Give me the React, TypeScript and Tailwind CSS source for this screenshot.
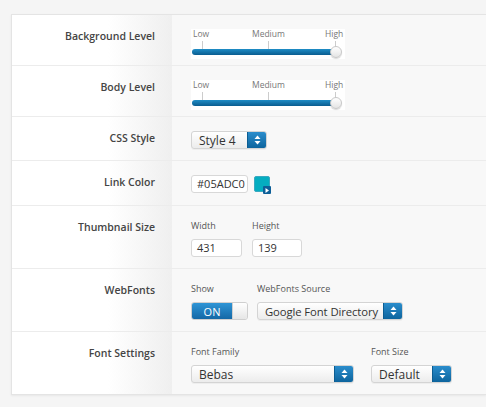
import React from 'react'

const font = { fontFamily: '"Open Sans", "DejaVu Sans", sans-serif' }

function Arrows() {
    return (
        <svg width="7" height="10" viewBox="0 0 7 10">
            <path d="M3.5 0.5 L6.5 4 L0.5 4 Z" fill="#fff" />
            <path d="M3.5 9.5 L6.5 6 L0.5 6 Z" fill="#fff" />
        </svg>
    )
}

function Select({ label, width, text = 'text-[12px]' }: { label: string; width: string; text?: string }) {
    return (
        <div className={`${width} h-[18px] flex rounded-[3px] border border-[#d4d4d4] bg-gradient-to-b from-white to-[#ececec] overflow-hidden shadow-[0_1px_0_rgba(0,0,0,0.04)]`}>
            <div className={`flex-1 min-w-0 whitespace-nowrap pl-[7px] ${text} leading-[17px] text-[#333]`}>{label}</div>
            <div className="w-[19px] h-full flex items-center justify-center bg-gradient-to-b from-[#2a8dcc] to-[#0d659e] border-l border-[#0c5d92]">
                <Arrows />
            </div>
        </div>
    )
}

function Slider() {
    return (
        <div className="relative w-[154px] h-[30px] bg-white">
            <span className="absolute left-[2px] top-[-1px] text-[8.5px] leading-[12px] text-[#777]">Low</span>
            <span className="absolute left-[61px] top-[-1px] text-[8.5px] leading-[12px] text-[#777]">Medium</span>
            <span className="absolute left-[134px] top-[-1px] text-[8.5px] leading-[12px] text-[#777]">High</span>
            <div className="absolute left-[11px] top-[12px] w-px h-[8px] bg-[#ccc]" />
            <div className="absolute left-[77px] top-[12px] w-px h-[8px] bg-[#ccc]" />
            <div className="absolute left-[144px] top-[12px] w-px h-[8px] bg-[#ccc]" />
            <div className="absolute left-[1px] top-[20px] w-[146px] h-[6px] rounded-full bg-gradient-to-b from-[#1f8dc6] to-[#0a5d90]" />
            <div className="absolute left-[139px] top-[17px] w-[12px] h-[12px] rounded-full border border-[#c8c8c8] bg-gradient-to-b from-white to-[#e4e4e4] shadow-[0_1px_1px_rgba(0,0,0,0.15)]" />
        </div>
    )
}

function Row({ label, h, last, children }: { label: string; h: string; last?: boolean; children: React.ReactNode }) {
    return (
        <div className={`flex ${h} ${last ? '' : 'border-b border-[#ececec]'}`}>
            <div className="w-[160px] shrink-0 bg-gradient-to-r from-white from-60% to-[#efefef] pt-[14px] pr-[17px] text-right text-[10.5px] leading-[14px] font-semibold text-[#444]">
                {label}
            </div>
            <div className="flex-1 bg-[#f8f8f8] pt-[14px] pl-[19px]">{children}</div>
        </div>
    )
}

function Small({ children }: { children: React.ReactNode }) {
    return <div className="text-[9px] leading-[12px] text-[#555] mb-[7px]">{children}</div>
}

export default function App() {
    return (
        <div className="w-[486px] h-[407px] bg-[#f5f5f5] pt-[14px] pl-[11px] overflow-hidden" style={font}>
            <div className="border-t border-l border-b border-[#e4e4e4] shadow-[0_1px_2px_rgba(0,0,0,0.06)] flex flex-col">
                <Row label="Background Level" h="h-[51px]"><Slider /></Row>
                <Row label="Body Level" h="h-[51px]"><Slider /></Row>
                <Row label="CSS Style" h="h-[44px]"><Select label="Style 4" width="w-[76px]" /></Row>
                <Row label="Link Color" h="h-[45px]">
                    <div className="flex items-start gap-[6px]">
                        <div className="w-[57px] h-[18px] rounded-[3px] border border-[#d8d8d8] bg-white pl-[5px] text-[11px] leading-[16px] text-[#333]">#05ADC0</div>
                        <div className="relative w-[16px] h-[16px] mt-[1px] rounded-[2px] border border-[#3aa8c0] bg-[#05adc0]">
                            <div className="absolute right-[-2px] bottom-[-3px] w-[8px] h-[8px] rounded-[1px] bg-[#0d5f98] flex items-center justify-center">
                                <svg width="4" height="5" viewBox="0 0 4 5"><path d="M0.5 0 L4 2.5 L0.5 5 Z" fill="#fff" /></svg>
                            </div>
                        </div>
                    </div>
                </Row>
                <Row label="Thumbnail Size" h="h-[63px]">
                    <div className="flex gap-[10px]">
                        <div>
                            <Small>Width</Small>
                            <div className="w-[51px] h-[18px] rounded-[3px] border border-[#d8d8d8] bg-white pl-[5px] text-[11px] leading-[16px] text-[#333]">431</div>
                        </div>
                        <div>
                            <Small>Height</Small>
                            <div className="w-[50px] h-[18px] rounded-[3px] border border-[#d8d8d8] bg-white pl-[5px] text-[11px] leading-[16px] text-[#333]">139</div>
                        </div>
                    </div>
                </Row>
                <Row label="WebFonts" h="h-[63px]">
                    <div className="flex gap-[9px]">
                        <div>
                            <Small>Show</Small>
                            <div className="w-[57px] h-[18px] flex rounded-[3px] border border-[#cfcfcf] overflow-hidden">
                                <div className="w-[40px] h-full bg-gradient-to-b from-[#2e95d6] to-[#1468a6] text-white text-[11px] leading-[17px] text-center">ON</div>
                                <div className="flex-1 bg-gradient-to-b from-white to-[#e6e6e6] border-l border-[#cfcfcf]" />
                            </div>
                        </div>
                        <div>
                            <Small>WebFonts Source</Small>
                            <Select label="Google Font Directory" width="w-[146px]" text="text-[11.3px] tracking-[-0.1px]" />
                        </div>
                    </div>
                </Row>
                <Row label="Font Settings" h="h-[62px]" last>
                    <div className="flex gap-[17px]">
                        <div>
                            <Small>Font Family</Small>
                            <Select label="Bebas" width="w-[163px]" />
                        </div>
                        <div>
                            <Small>Font Size</Small>
                            <Select label="Default" width="w-[81px]" />
                        </div>
                    </div>
                </Row>
            </div>
        </div>
    )
}
